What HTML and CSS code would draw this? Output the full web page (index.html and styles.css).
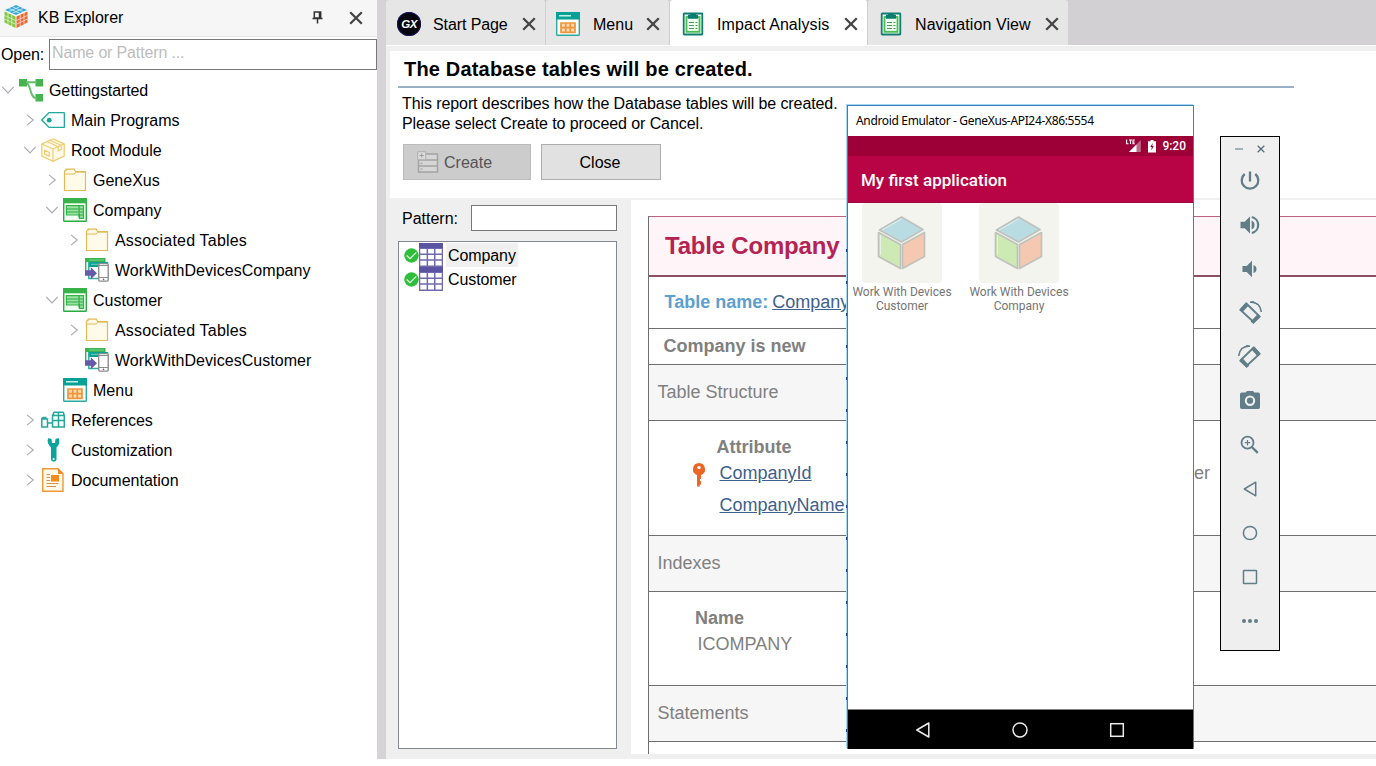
FILE: index.html
```html
<!DOCTYPE html>
<html lang="en">
<head>
<meta charset="utf-8">
<title>KB Explorer</title>
<link rel="stylesheet" href="styles.css">
</head>
<body>
<svg class="defs" width="0" height="0">
  <symbol id="close" viewBox="0 0 14 14"><path d="M1.2 1.2 12.8 12.8M12.8 1.2 1.2 12.8" stroke="#454545" stroke-width="2.3" fill="none"/></symbol>
  <symbol id="right" viewBox="0 0 12 12"><path d="M3 .8 9.3 6 3 11.2" stroke="#a9a9b0" stroke-width="1.1" fill="none"/></symbol>
  <symbol id="down" viewBox="0 0 12 12"><path d="M.3 3 6 9 11.700 3" stroke="#a9a9b0" stroke-width="1.1" fill="none"/></symbol>
  <symbol id="kb" viewBox="0 0 24 24">
    <path d="M0 1h8v7.500H0zM16.500 1H24v7.500h-7.500zM16.500 16H24v7.500h-7.500z" fill="#45b34e"/>
    <path d="M7 4.300h11M8 5.500c4 1 2.500 15 10 15" fill="none" stroke="#63bd6b" stroke-width="1.900"/>
  </symbol>
  <symbol id="tag" viewBox="0 0 24 24"><path d="M8 4.600h14.500q.9 0 .9.9v13q0 .9-.9.9H8L.8 12z" fill="#f8fffe" stroke="#23a89d" stroke-width="1.4"/><circle cx="8.200" cy="12.200" r="2.400" fill="#12a296"/></symbol>
  <symbol id="box" viewBox="0 0 24 24"><path d="M12 .8 23.200 6v12L12 23.300.8 18V6z" fill="#fffaea" stroke="#efcb6b" stroke-width="1.200"/><path d="M.8 6 12 11 23.200 6M12 11v12.300M6 3.600l11.200 5.200v4l3-1.400V7.300L9 2.200" fill="none" stroke="#efcb6b" stroke-width="1.100"/><path d="m3.600 12.300 4.600 2v3.800l-4.600-2z" fill="none" stroke="#efcb6b" stroke-width="1.100"/></symbol>
  <symbol id="folder" viewBox="0 0 24 24"><path d="M1.500 22.500V3.500q0-1.200 1.500-1.200V1.200h8.300l1.200 2.300h10v19z" fill="#fffbe9" stroke="#e2ba55" stroke-width="1.200"/><path d="M1.500 6h9.800l1.400-1.800h9.800" fill="none" stroke="#e2ba55" stroke-width="1"/></symbol>
  <symbol id="trn" viewBox="0 0 24 24"><rect x=".7" y=".7" width="22.600" height="22.600" rx=".8" fill="#f3fff4" stroke="#2cab43" stroke-width="1.400"/><path d="M0 0h24v5.300H0z" fill="#38b349"/><path d="M3.300 7.600h17.200v12.700h-4V17h-13z" fill="#9ae3a1" stroke="#35b14a" stroke-width="1.200"/><path d="M4 11h11M4 14h11M16 7.500v12M16 11h4M16 14h4M16 17h4" stroke="#2fa745" stroke-width="1.200"/></symbol>
  <symbol id="wwd" viewBox="0 0 24 24"><path d="M0 0h20.500v4H0z" fill="#39b34b"/><path d="M.7 1v12" stroke="#39b34b" stroke-width="1.400"/><path d="M3.200 4h20v5h-20z" fill="#09a196"/><path d="M3.800 5v15.500H14" fill="none" stroke="#35aea5" stroke-width="1.500"/><path d="M4 2h15M6 6.300h7" stroke="#91d8b5" stroke-width=".8"/><path d="M0 12.300h5.800v-3l6.200 6-6.200 6v-3.500H0z" fill="#655aa8"/><rect x="13.700" y="5.600" width="9.500" height="17.500" rx="1" fill="#fff" stroke="#8d8d8d" stroke-width="1.400"/><path d="M14 19.500h9M14 7.500h9" stroke="#8d8d8d" stroke-width="1.200"/><circle cx="18.500" cy="21.400" r=".8" fill="#666"/></symbol>
  <symbol id="menu" viewBox="0 0 24 24"><rect x=".7" y=".7" width="22.600" height="22.600" rx=".8" fill="#fff" stroke="#2ca89f" stroke-width="1.400"/><path d="M0 0h24v7.500H0z" fill="#09a196"/><path d="M3 3.800h12" stroke="#e6fffa" stroke-width="1.300"/><path d="M5 11h14v9.400H5zM9.700 11v9.400M14.300 11v9.400M5 15.700h14" fill="#ffdab0" stroke="#ed963e" stroke-width="1.700"/></symbol>
  <symbol id="refs" viewBox="0 0 24 24"><path d="M.8 11h5.700v8H.8zM1 11q0-1.500 1.500-1.500h3M7 15h4M11.500 12V7.500q0-1 1-1V5q0-.8.800-.8h8.500q.9 0 .9.800v1.800q.6 0 .6 1V19H11.500zM11.500 12.500h12M17.500 5v14M12 7.500h11.500" fill="#f5fffe" stroke="#27a69a" stroke-width="1.500"/></symbol>
  <symbol id="wrench" viewBox="0 0 24 24"><path d="M7.500 0 10.500 1 11 5h3l.5-4 3-1q2.500 5-2 9.500V22q-2.500 3.500-5.500 0V9.500Q4.800 5 7.500 0z" fill="#0ba498"/><circle cx="12.600" cy="21" r="1.100" fill="#fff"/></symbol>
  <symbol id="doc" viewBox="0 0 24 24"><path d="M1.700.7h15.500l4.800 5v17.600H1.700z" fill="#fff9ec" stroke="#ef9838" stroke-width="1.400"/><path d="M17 .5v5.600h5.500z" fill="#f08d25"/><path d="M5.500 6.500H9M5.500 9.500H9M5.500 12.500H9M5.500 15.500h12M5.500 18.500h9.500" stroke="#dc9147" stroke-width="1.200"/><path d="M10 7h8v6.500h-8z" fill="#f38a1e"/></symbol>
  <symbol id="clip" viewBox="0 0 22 24"><rect x="1.700" y="1.500" width="18.600" height="21" rx=".5" fill="#edfff0" stroke="#147d72" stroke-width="1.800"/><rect x="4.500" y="5" width="13" height="14.800" fill="#effff0" stroke="#4cbc55" stroke-width="1.800"/><path d="M6 2.800h2V1h6v1.800h2v4H6z" fill="#0b7c70"/><path d="M7 10.500h5M7 13.500h5M7 16.500h5M13.500 10.500h2M13.500 13.500h2M13.500 16.500h2" stroke="#4a9b58" stroke-width="1.200"/></symbol>
  <symbol id="grid" viewBox="0 0 24 24"><path d="M0 0h24v24H0z" fill="#6f69ae"/><path d="M0 0h24v5H0z" fill="#5b55a1"/><path d="M1.300 5.900h6.300v4.600H1.300zM9.100 5.900h5.900v4.600H9.100zM16.500 5.900h6.200v4.600h-6.200zM1.300 12h6.300v4.300H1.300zM9.100 12h5.900v4.300H9.100zM16.500 12h6.200v4.300h-6.200zM1.300 17.800h6.300v4.700H1.300zM9.100 17.800h5.900v4.700H9.100zM16.500 17.800h6.200v4.700h-6.200z" fill="#fff"/></symbol>
  <symbol id="check" viewBox="0 0 15 15"><circle cx="7.500" cy="7.500" r="7.200" fill="#30be3a"/><path d="m2.700 7.500 3.300 3.200 6.300-6.300" fill="none" stroke="#e3ffe3" stroke-width="1.200"/></symbol>
  <symbol id="cube" viewBox="0 0 80 80"><rect width="80" height="80" rx="4" fill="#f3f4ee"/><g stroke="#bfc2bd" stroke-width="1.700" stroke-linejoin="round"><path d="M39.500 14 61 26.500 39.500 39 17.500 27z" fill="#b9dce3"/><path d="M16.500 29.500 38.500 41.500v24L16.500 53.500z" fill="#cde9b4"/><path d="M62.500 29.500 40.500 41.500v24L62.500 53.500z" fill="#f5c9b1"/></g><path d="M39.500 16 20 27M18.500 32v20" stroke="#eef5ef" stroke-width=".8"/></symbol>
  <symbol id="rot" viewBox="0 0 24 24"><path d="m8.300 2.500 12.600 12.200-5.400 6.200L2.500 8.900z" fill="none" stroke="#607d88" stroke-width="1.900"/><path d="m1.500 8.500 6.300-7 3 2.800L4.500 11.300zM12.600 20.500l7.200-7.500 3.200 2.800-7.700 7.200z" fill="#607d88"/><path d="M12 1.300q10-.8 11.300 9.700" stroke="#607d88" stroke-width="1.500" fill="none"/><path d="m12 .3 3.500-.2 3.500 3.700z" fill="#607d88"/></symbol>
</svg>

<div class="app">
  <aside class="explorer">
    <header class="explorer-head">
      <svg class="logo" viewBox="0 0 24 24">
        <path d="M12 0 23 5 12 10 1 5z" fill="#35a9d6"/><path d="M.5 6.500 11.500 11.500V23L.5 17.500z" fill="#7fc83f"/><path d="M23.500 6.500 12.500 11.500V23l11-5.500z" fill="#ee6530"/>
        <path d="m4.700 3.300 11 5M8.300 1.700l11 5M4.700 6.700l11-5M8.300 8.300l11-5M4 8v11.500M7.800 9.700v11.500M.5 10.400l11 5.200M.5 14l11 5.200M20 8v11.500M16.200 9.700v11.500M23.500 10.400l-11 5.200M23.500 14l-11 5.200" stroke="#f0f4f0" stroke-width=".7" fill="none"/>
      </svg>
      <span class="explorer-title">KB Explorer</span>
      <svg class="pin" viewBox="0 0 11 13"><path d="M2.300 1h6.400v6H2.300zM7.500 1v6M.5 7.600h10M5.500 8v4.500" fill="none" stroke="#333" stroke-width="1.500"/></svg>
      <svg class="x14"><use href="#close"/></svg>
    </header>
    <div class="open"><label>Open:</label><div class="open-input">Name or Pattern ...</div></div>
    <ul class="tree">
      <li class="l0"><svg><use href="#down"/></svg><svg class="ic"><use href="#kb"/></svg><span>Gettingstarted</span></li>
      <li class="l1"><svg><use href="#right"/></svg><svg class="ic"><use href="#tag"/></svg><span>Main Programs</span></li>
      <li class="l1"><svg><use href="#down"/></svg><svg class="ic"><use href="#box"/></svg><span>Root Module</span></li>
      <li class="l2"><svg><use href="#right"/></svg><svg class="ic"><use href="#folder"/></svg><span>GeneXus</span></li>
      <li class="l2"><svg><use href="#down"/></svg><svg class="ic"><use href="#trn"/></svg><span>Company</span></li>
      <li class="l3"><svg><use href="#right"/></svg><svg class="ic"><use href="#folder"/></svg><span class="assoc">Associated Tables</span></li>
      <li class="l3"><svg></svg><svg class="ic"><use href="#wwd"/></svg><span class="wide">WorkWithDevicesCompany</span></li>
      <li class="l2"><svg><use href="#down"/></svg><svg class="ic"><use href="#trn"/></svg><span>Customer</span></li>
      <li class="l3"><svg><use href="#right"/></svg><svg class="ic"><use href="#folder"/></svg><span class="assoc">Associated Tables</span></li>
      <li class="l3"><svg></svg><svg class="ic"><use href="#wwd"/></svg><span class="wide">WorkWithDevicesCustomer</span></li>
      <li class="l2"><svg></svg><svg class="ic"><use href="#menu"/></svg><span>Menu</span></li>
      <li class="l1"><svg><use href="#right"/></svg><svg class="ic"><use href="#refs"/></svg><span>References</span></li>
      <li class="l1"><svg><use href="#right"/></svg><svg class="ic"><use href="#wrench"/></svg><span>Customization</span></li>
      <li class="l1"><svg><use href="#right"/></svg><svg class="ic"><use href="#doc"/></svg><span>Documentation</span></li>
    </ul>
  </aside>

  <main class="work">
    <nav class="tabs">
      <div class="tab tab-start"><span class="gx"><b>GX</b></span><span class="tab-label">Start Page</span><svg class="x14"><use href="#close"/></svg></div>
      <div class="tab tab-menu"><svg class="ic"><use href="#menu"/></svg><span class="tab-label">Menu</span><svg class="x14"><use href="#close"/></svg></div>
      <div class="tab tab-impact"><svg class="ic clip"><use href="#clip"/></svg><span class="tab-label">Impact Analysis</span><svg class="x14"><use href="#close"/></svg></div>
      <div class="tab tab-nav"><svg class="ic clip"><use href="#clip"/></svg><span class="tab-label">Navigation View</span><svg class="x14"><use href="#close"/></svg></div>
    </nav>

    <section class="report">
      <h1>The Database tables will be created.</h1>
      <p>This report describes how the Database tables will be created.<br>Please select Create to proceed or Cancel.</p>
      <div class="buttons">
        <div class="btn btn-create"><svg viewBox="0 0 22 22"><path d="M1.500 9v12h19V3H9M1.500 9h19M1.500 15h19" fill="#d6d6d6" stroke="#a3a3a3" stroke-width="1.500"/><path d="M.7.700h8v8h-8z" fill="#dadada" stroke="#b0b0b0"/><path d="M4.700 2.500v4M2.700 4.500h4M3.500 12.300h2M3.500 18h2" stroke="#999"/></svg><span>Create</span></div>
        <div class="btn btn-close"><span>Close</span></div>
      </div>
    </section>

    <div class="panes">
      <section class="pattern">
        <div class="pattern-row"><label>Pattern:</label><div class="pattern-input"></div></div>
        <div class="list">
          <div class="item"><svg class="ok"><use href="#check"/></svg><svg class="ic"><use href="#grid"/></svg><span class="sel">Company</span></div>
          <div class="item"><svg class="ok"><use href="#check"/></svg><svg class="ic"><use href="#grid"/></svg><span>Customer</span></div>
        </div>
      </section>
      <section class="detail">
        <div class="table">
          <div class="row r-title">Table Company</div>
          <div class="row r-name"><b>Table name:</b><u>Company</u></div>
          <div class="row r-new">Company is new</div>
          <div class="row r-band">Table Structure</div>
          <div class="row r-attrs">
            <div class="attr-head">Attribute</div>
            <div class="attr"><svg class="key" viewBox="0 0 14 24"><path d="M7 0a6.200 6.200 0 0 1 2 12v4h-1v2h1v3.500h-1.200v2H5V12A6.200 6.200 0 0 1 7 0z" fill="#ec6628"/><circle cx="7" cy="4.600" r="1.700" fill="#fff"/></svg><u>CompanyId</u><span class="attr-more">er</span></div>
            <div class="attr attr-two"><u>CompanyName</u></div>
          </div>
          <div class="row r-band">Indexes</div>
          <div class="row r-index"><b>Name</b><span>ICOMPANY</span></div>
          <div class="row r-band">Statements</div>
        </div>
      </section>
    </div>
  </main>
</div>

<div class="emulator">
  <div class="emu-title">Android Emulator - GeneXus-API24-X86:5554</div>
  <div class="emu-status">
    <svg class="signal" viewBox="0 0 16 14"><path d="M14.800 1v12H3z" fill="#bd6d87"/><path d="M10.500 5.500V13H3z" fill="#fff"/><path d="M.6.500v4.300h1.900M3 1h3M4.500 1v4M8.800 1H7v3.800h1.800M7 3h1.600" fill="none" stroke="#fff" stroke-width="1.100"/></svg>
    <svg class="battery" viewBox="0 0 8 13"><path d="M2.500 0h3v1.200H8V12.500H0V1.200h2.500z" fill="#fff"/><path d="M4.700 3 2.300 7h1.500l-.6 3.500L5.800 6H4.300z" fill="#8f0034"/></svg>
    <span>9:20</span>
  </div>
  <div class="emu-bar">My first application</div>
  <div class="emu-body">
    <div class="launch"><svg><use href="#cube"/></svg><span>Work With Devices<br>Customer</span></div>
    <div class="launch"><svg><use href="#cube"/></svg><span>Work With Devices<br>Company</span></div>
  </div>
  <div class="emu-nav">
    <svg viewBox="0 0 16 16"><path d="M13.800 1v14L1.800 8z" fill="none" stroke="#ececec" stroke-width="1.500" stroke-linejoin="round"/></svg>
    <svg viewBox="0 0 16 16"><circle cx="8" cy="8" r="7" fill="none" stroke="#ececec" stroke-width="1.500"/></svg>
    <svg viewBox="0 0 16 16"><rect x="1.700" y="1.700" width="12.600" height="12.600" fill="none" stroke="#ececec" stroke-width="1.500"/></svg>
  </div>
</div>

<div class="toolbar">
  <div class="tb-head"><svg viewBox="0 0 8 8"><path d="M0 4h8" stroke="#90a0a8" stroke-width="1.600"/></svg><svg viewBox="0 0 8 8"><path d="m.7.700 6.600 6.600M7.300.700.7 7.300" stroke="#546e7a" stroke-width="1.300"/></svg></div>
  <svg viewBox="0 0 24 24"><path d="M6.700 5a8.300 8.300 0 1 0 10.600 0M12 2.500v10" fill="none" stroke="#607d88" stroke-width="2.300"/></svg>
  <svg viewBox="0 0 24 24"><path d="M2.500 8.800h4.200L12 3.500v17l-5.300-5.300H2.500z" fill="#607d88"/><path d="M13.600 7.500v9q2.900-1 2.900-4.500t-2.900-4.500z" fill="#607d88"/><path d="M13.800 4a8.200 8.200 0 0 1 0 16" fill="none" stroke="#607d88" stroke-width="2.200"/></svg>
  <svg viewBox="0 0 24 24"><path d="M4.500 9h4.200L14 3.700v16.600L8.700 15H4.500zM15.500 8v8q3-1 3-4t-3-4z" fill="#607d88"/></svg>
  <svg viewBox="0 0 24 24"><use href="#rot"/></svg>
  <svg viewBox="0 0 24 24"><use href="#rot" transform="translate(24 0) scale(-1 1)"/></svg>
  <svg viewBox="0 0 24 24"><path fill-rule="evenodd" d="M3.800 3.500h3.700L9 2h6l1.500 1.500h3.700q1.800 0 1.800 1.800v13q0 1.700-1.800 1.700H3.800Q2 20 2 18.300v-13q0-1.800 1.800-1.800zM12 6.500a5.200 5.200 0 1 0 0 10.400 5.200 5.200 0 0 0 0-10.400z" fill="#607d88"/><circle cx="12" cy="11.700" r="3.100" fill="#607d88"/></svg>
  <svg viewBox="0 0 24 24"><circle cx="9.500" cy="9.700" r="6" fill="none" stroke="#607d88" stroke-width="1.800"/><path d="m13.800 14 6 5.800" stroke="#607d88" stroke-width="2.400"/><path d="M9.500 7v5.400M6.800 9.700h5.400" stroke="#607d88" stroke-width="1.200"/></svg>
  <svg viewBox="0 0 24 24"><path d="M17.700 5.200v13.600L6.300 12z" fill="none" stroke="#607d88" stroke-width="1.500" stroke-linejoin="round"/></svg>
  <svg viewBox="0 0 24 24"><circle cx="12" cy="12" r="6.600" fill="none" stroke="#607d88" stroke-width="1.500"/></svg>
  <svg viewBox="0 0 24 24"><rect x="5.500" y="5.500" width="13" height="13" rx=".6" fill="none" stroke="#607d88" stroke-width="1.500"/></svg>
  <svg viewBox="0 0 24 24"><circle cx="6" cy="12" r="2" fill="#607d88"/><circle cx="12" cy="12" r="2" fill="#607d88"/><circle cx="18" cy="12" r="2" fill="#607d88"/></svg>
</div>
</body>
</html>
```
FILE: styles.css
```css
* { box-sizing: border-box; }
body { margin: 0; width: 1376px; height: 766px; overflow: hidden; background: #fff; color: #000; font: 16px/20px "Liberation Sans", Arial, sans-serif; }
svg { display: block; flex: none; }
.defs { position: absolute; }
.ic { width: 24px; height: 24px; }
.x14 { width: 14px; height: 14px; }
.app { display: flex; height: 759px; }

.explorer { width: 386px; border-right: 9px solid #d5d3d6; background: #fff; }
.explorer-head { height: 37px; display: flex; align-items: center; padding: 0 14px 0 4px; background: #f6f6f6; border-bottom: 1px solid #e6e6e6; }
.logo { width: 24px; height: 24px; margin-bottom: 2px; }
.explorer-title { margin: 0 0 1px 10px; flex: 1; }
.pin { width: 11px; height: 13px; margin: 0 26px 1px 0; }
.open { display: flex; align-items: center; height: 34px; padding-left: 1px; }
.open label { width: 48px; padding-top: 1px; letter-spacing: -0.1px; }
.open-input { width: 328px; height: 31px; border: 1px solid #787878; padding: 3px 2px; color: #bdbdbd; line-height: 20px; letter-spacing: -0.15px; }
.tree { list-style: none; margin: 4px 0 0; padding: 0; }
.tree li { display: flex; align-items: center; height: 30px; padding-left: 2px; }
.tree li svg:first-child { width: 12px; height: 12px; margin-right: 5px; }
.tree li span { margin-left: 6px; padding-top: 2px; }
.tree .l0 span { letter-spacing: -0.1px; }
.tree .wide { letter-spacing: 0.05px; }
.tree .assoc { letter-spacing: 0.2px; }
.tree .l1 { padding-left: 24px; }
.tree .l2 { padding-left: 46px; }
.tree .l3 { padding-left: 68px; }

.work { flex: 1; min-width: 0; display: flex; flex-direction: column; background: #efefef; }
.tabs { display: flex; height: 46px; background: #d2d0d3; border-bottom: 1px solid #fff; }
.tab { display: flex; align-items: center; height: 45px; padding: 3px 9px 0 11px; background: #e6e6e6; border-right: 1px solid #cfcfcf; border-radius: 3px 3px 0 0; }
.tab-label { flex: 1; padding-top: 1px; }
.tab-start { width: 160px; }
.tab-start .tab-label { margin-left: 12px; letter-spacing: -0.1px; }
.tab-menu { width: 124px; padding-left: 10px; }
.tab-menu .tab-label { margin-left: 13px; }
.tab-impact { width: 198px; background: #fff; }
.tab-impact .tab-label, .tab-nav .tab-label { margin-left: 12px; letter-spacing: 0.08px; }
.tab-nav { width: 200px; border-right: 0; }
.gx { width: 24px; height: 24px; border-radius: 50%; background: #04040c; box-shadow: inset 0 0 0 1px #17175c; color: #fff; display: flex; align-items: center; justify-content: center; font-style: italic; font-size: 11.5px; letter-spacing: -0.5px; }

.report { margin: 5px 0 0 4px; height: 147px; background: #fff; padding: 0 0 0 8px; }
h1 { margin: 0; width: 896px; height: 37px; padding: 8px 0 0 6px; border-bottom: 2px solid #9ab0c9; font-size: 20px; line-height: 20px; letter-spacing: 0.18px; white-space: nowrap; }
.report p { margin: 6px 0 0 4px; letter-spacing: -0.09px; }
.buttons { display: flex; gap: 10px; padding: 10px 0 0 5px; }
.btn { height: 36px; display: flex; align-items: center; border: 1px solid #adadad; background: #e1e1e1; }
.btn span { padding-top: 2px; }
.btn-create { width: 128px; padding-left: 13px; gap: 5px; background: #ccc; border-color: #bcbcbc; color: #555; }
.btn-create svg { width: 22px; height: 22px; }
.btn-close { width: 120px; justify-content: center; padding-right: 2px; }

.panes { display: flex; margin-top: 2px; height: 554px; }
.pattern { width: 245px; padding: 5px 14px 0 12px; }
.pattern-row { display: flex; align-items: center; height: 26px; padding-left: 4px; }
.pattern-row label { width: 69px; padding-top: 2px; }
.pattern-input { width: 146px; height: 26px; border: 1px solid #787878; background: #fff; }
.list { margin-top: 10px; height: 508px; border: 1px solid #828790; background: #fff; padding: 1px 0 0 5px; }
.item { display: flex; align-items: center; height: 24px; }
.ok { width: 15px; height: 15px; }
.item span { margin-left: 3px; padding: 3px 2px 1px; letter-spacing: -0.1px; }
.item .sel { background: #f0f0f0; }

.detail { flex: 1; min-width: 0; background: #fff; padding: 16px 0 0 17px; overflow: hidden; }
.table { height: 538px; overflow: hidden; border-left: 1px solid #6e6e6e; color: #808080; font-size: 18px; }
.row { border-bottom: 1px solid #6e6e6e; white-space: nowrap; }
.r-title { height: 61px; margin-left: -1px; border: 1px solid #bd6580; border-right: 0; border-bottom: 2px solid #8b4e62; background: #fff5f9; color: #b62252; font-weight: bold; font-size: 24px; line-height: 58px; padding-left: 16px; letter-spacing: -0.2px; }
.r-name { height: 52px; line-height: 50px; padding-left: 15.5px; }
.r-name b { color: #5c9fd0; margin-right: 4px; }
u { color: #3f5f8c; }
.r-new { height: 36px; line-height: 35px; padding-left: 14.5px; font-weight: bold; }
.r-band { height: 56px; line-height: 54px; padding-left: 8.5px; background: #f6f6f6; }
.r-attrs { height: 115px; padding-top: 16px; }
.attr-head { padding-left: 67.5px; font-weight: bold; line-height: 20px; }
.attr { display: flex; align-items: center; height: 32px; padding-left: 43px; }
.key { width: 14px; height: 24px; margin: 3px 13.5px 0 0; }
.attr-more { margin-left: 382.5px; }
.attr-two { padding-left: 70.5px; }
.r-index { height: 94px; padding: 16px 0 0 46px; display: flex; flex-direction: column; }
.r-index b { line-height: 20px; }
.r-index span { margin: 6px 0 0 2.5px; }

.emulator { position: absolute; left: 847px; top: 105px; width: 347px; height: 644px; display: flex; flex-direction: column; background: #fff; border: 1px solid #3c80b5; border-bottom: 0; box-shadow: -1px -1px 0 #a4d9f5; font-family: Roboto, sans-serif; }
.emulator::before { content: ""; position: absolute; left: -2px; top: 142px; width: 1px; bottom: 10px; background: repeating-linear-gradient(#a4d9f5 0 1px, #19438a 1px 4px, #a4d9f5 4px 32px); }
.emu-title { height: 30px; padding-left: 8px; font: 12px/30px "Noto Sans", sans-serif; letter-spacing: -0.34px; white-space: nowrap; }
.emu-status { height: 20px; display: flex; align-items: center; justify-content: flex-end; padding-right: 7px; background: #9d0037; color: #fff; font-size: 12px; font-weight: 500; }
.signal { width: 16px; height: 14px; margin-right: 6px; }
.battery { width: 8px; height: 13px; margin-right: 6px; }
.emu-bar { height: 47px; background: #b80444; color: #fff; font-size: 17px; font-weight: 500; line-height: 49px; padding-left: 13px; border-bottom: 1px solid #9d0b40; }
.emu-body { flex: 1; display: flex; }
.launch { width: 117px; display: flex; flex-direction: column; align-items: center; padding-right: 9px; font-size: 12px; line-height: 14px; color: #757575; text-align: center; white-space: nowrap; }
.launch svg { width: 80px; height: 80px; margin-bottom: 2px; }
.emu-nav { height: 40px; background: #000; border-top: 1px solid #808080; display: flex; align-items: center; justify-content: center; gap: 81px; padding-right: 1px; }
.emu-nav svg { width: 16px; height: 16px; }

.toolbar { position: absolute; left: 1220px; top: 136px; width: 60px; height: 515px; border: 1px solid #000; background: #efefef; display: flex; flex-direction: column; align-items: center; }
.toolbar > svg { width: 24px; height: 24px; margin-bottom: 20px; overflow: visible; }
.tb-head { display: flex; gap: 14px; width: 30px; height: 32px; padding-top: 8px; flex: none; }
.tb-head svg { width: 8px; height: 8px; }
```
